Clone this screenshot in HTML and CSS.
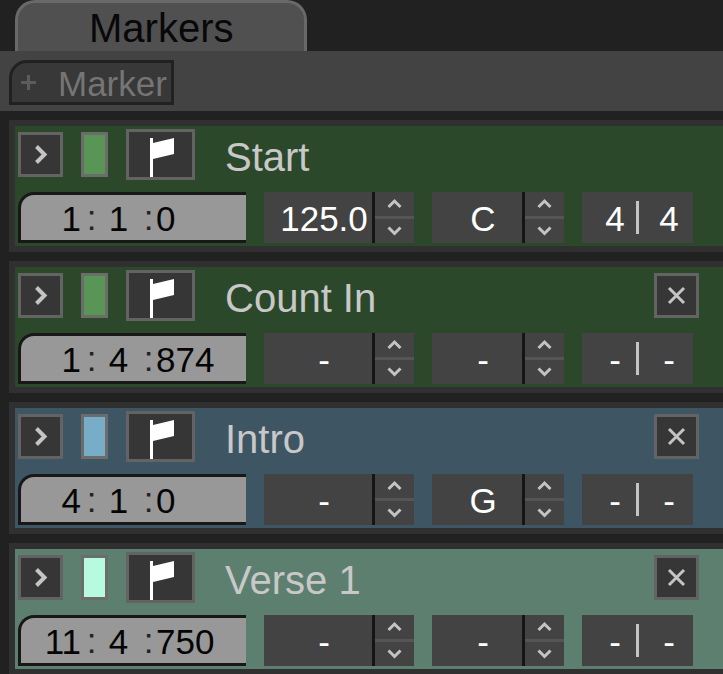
FILE: index.html
```html
<!DOCTYPE html>
<html lang="en">
<head>
    <meta charset="UTF-8">
    <meta name="viewport" content="width=device-width, initial-scale=1.0">
    <title>Markers</title>
    <link rel="stylesheet" href="styles.css">
</head>
<body>
    <!-- Shared icons -->
    <svg class="icon-defs" aria-hidden="true">
        <symbol id="icon-expand" viewBox="0 0 39 39"><path d="M15.500 11.500l8 8-8 8" /></symbol>
        <symbol id="icon-close" viewBox="0 0 39 39"><path d="M12 12l15 15M27 12l-15 15" /></symbol>
        <symbol id="icon-up" viewBox="0 0 39 24"><path d="M13.500 15l6-6 6 6" /></symbol>
        <symbol id="icon-down" viewBox="0 0 39 24"><path d="M13.500 8.500l6 6 6-6" /></symbol>
        <symbol id="icon-flag" viewBox="0 0 63 45"><path d="M21 6h3v5l21-5v16l-21 5v18h-3z" /></symbol>
    </svg>

    <nav class="tabs">
        <button class="tab active">Markers</button>
    </nav>

    <div class="toolbar">
        <button class="add-button">
            <svg viewBox="0 0 15 15" aria-hidden="true"><path d="M7.500 0v15M0 7.500h15" /></svg>
            Marker
        </button>
    </div>

    <main class="marker-list">
        <section class="marker green">
            <div class="marker-row">
                <button class="icon-button" aria-label="Expand"><svg><use href="#icon-expand" /></svg></button>
                <button class="swatch" aria-label="Colour"></button>
                <button class="flag-button" aria-label="Go to marker"><svg><use href="#icon-flag" /></svg></button>
                <h2>Start</h2>
            </div>
            <div class="marker-row">
                <div class="time">
                    <input class="bar" type="text" aria-label="Bar" value="1">
                    <span>:</span>
                    <input class="beat" type="text" aria-label="Beat" value="1">
                    <span>:</span>
                    <input class="tick" type="text" aria-label="Tick" value="0">
                </div>
                <div class="stepper tempo">
                    <input type="text" aria-label="Tempo" value="125.0">
                    <div class="steps">
                        <button aria-label="Tempo up"><svg><use href="#icon-up" /></svg></button>
                        <button aria-label="Tempo down"><svg><use href="#icon-down" /></svg></button>
                    </div>
                </div>
                <div class="stepper key">
                    <input type="text" aria-label="Key" value="C">
                    <div class="steps">
                        <button aria-label="Key up"><svg><use href="#icon-up" /></svg></button>
                        <button aria-label="Key down"><svg><use href="#icon-down" /></svg></button>
                    </div>
                </div>
                <div class="signature">
                    <input type="text" aria-label="Beats per bar" value="4">
                    <input type="text" aria-label="Beat unit" value="4">
                </div>
            </div>
        </section>

        <section class="marker green">
            <div class="marker-row">
                <button class="icon-button" aria-label="Expand"><svg><use href="#icon-expand" /></svg></button>
                <button class="swatch" aria-label="Colour"></button>
                <button class="flag-button" aria-label="Go to marker"><svg><use href="#icon-flag" /></svg></button>
                <h2>Count In</h2>
                <button class="icon-button close" aria-label="Delete"><svg><use href="#icon-close" /></svg></button>
            </div>
            <div class="marker-row">
                <div class="time">
                    <input class="bar" type="text" aria-label="Bar" value="1">
                    <span>:</span>
                    <input class="beat" type="text" aria-label="Beat" value="4">
                    <span>:</span>
                    <input class="tick" type="text" aria-label="Tick" value="874">
                </div>
                <div class="stepper tempo">
                    <input type="text" aria-label="Tempo" value="-">
                    <div class="steps">
                        <button aria-label="Tempo up"><svg><use href="#icon-up" /></svg></button>
                        <button aria-label="Tempo down"><svg><use href="#icon-down" /></svg></button>
                    </div>
                </div>
                <div class="stepper key">
                    <input type="text" aria-label="Key" value="-">
                    <div class="steps">
                        <button aria-label="Key up"><svg><use href="#icon-up" /></svg></button>
                        <button aria-label="Key down"><svg><use href="#icon-down" /></svg></button>
                    </div>
                </div>
                <div class="signature">
                    <input type="text" aria-label="Beats per bar" value="-">
                    <input type="text" aria-label="Beat unit" value="-">
                </div>
            </div>
        </section>

        <section class="marker blue">
            <div class="marker-row">
                <button class="icon-button" aria-label="Expand"><svg><use href="#icon-expand" /></svg></button>
                <button class="swatch" aria-label="Colour"></button>
                <button class="flag-button" aria-label="Go to marker"><svg><use href="#icon-flag" /></svg></button>
                <h2>Intro</h2>
                <button class="icon-button close" aria-label="Delete"><svg><use href="#icon-close" /></svg></button>
            </div>
            <div class="marker-row">
                <div class="time">
                    <input class="bar" type="text" aria-label="Bar" value="4">
                    <span>:</span>
                    <input class="beat" type="text" aria-label="Beat" value="1">
                    <span>:</span>
                    <input class="tick" type="text" aria-label="Tick" value="0">
                </div>
                <div class="stepper tempo">
                    <input type="text" aria-label="Tempo" value="-">
                    <div class="steps">
                        <button aria-label="Tempo up"><svg><use href="#icon-up" /></svg></button>
                        <button aria-label="Tempo down"><svg><use href="#icon-down" /></svg></button>
                    </div>
                </div>
                <div class="stepper key">
                    <input type="text" aria-label="Key" value="G">
                    <div class="steps">
                        <button aria-label="Key up"><svg><use href="#icon-up" /></svg></button>
                        <button aria-label="Key down"><svg><use href="#icon-down" /></svg></button>
                    </div>
                </div>
                <div class="signature">
                    <input type="text" aria-label="Beats per bar" value="-">
                    <input type="text" aria-label="Beat unit" value="-">
                </div>
            </div>
        </section>

        <section class="marker mint">
            <div class="marker-row">
                <button class="icon-button" aria-label="Expand"><svg><use href="#icon-expand" /></svg></button>
                <button class="swatch" aria-label="Colour"></button>
                <button class="flag-button" aria-label="Go to marker"><svg><use href="#icon-flag" /></svg></button>
                <h2>Verse 1</h2>
                <button class="icon-button close" aria-label="Delete"><svg><use href="#icon-close" /></svg></button>
            </div>
            <div class="marker-row">
                <div class="time">
                    <input class="bar" type="text" aria-label="Bar" value="11">
                    <span>:</span>
                    <input class="beat" type="text" aria-label="Beat" value="4">
                    <span>:</span>
                    <input class="tick" type="text" aria-label="Tick" value="750">
                </div>
                <div class="stepper tempo">
                    <input type="text" aria-label="Tempo" value="-">
                    <div class="steps">
                        <button aria-label="Tempo up"><svg><use href="#icon-up" /></svg></button>
                        <button aria-label="Tempo down"><svg><use href="#icon-down" /></svg></button>
                    </div>
                </div>
                <div class="stepper key">
                    <input type="text" aria-label="Key" value="-">
                    <div class="steps">
                        <button aria-label="Key up"><svg><use href="#icon-up" /></svg></button>
                        <button aria-label="Key down"><svg><use href="#icon-down" /></svg></button>
                    </div>
                </div>
                <div class="signature">
                    <input type="text" aria-label="Beats per bar" value="-">
                    <input type="text" aria-label="Beat unit" value="-">
                </div>
            </div>
        </section>
    </main>
</body>
</html>
```
FILE: styles.css
```css
* {
    box-sizing: border-box;
}
body {
    margin: 0;
    background: #212122;
    font-family: "Liberation Sans", Arial, sans-serif;
    font-size: 35px;
}
button, input {
    margin: 0;
    padding: 0;
    border: none;
    border-radius: 0;
    background: none;
    color: inherit;
    font: inherit;
}
button {
    cursor: pointer;
}
svg {
    display: block;
    width: 100%;
    height: 100%;
    fill: none;
    stroke: #c4c4c4;
    stroke-width: 3;
}
.icon-defs {
    position: absolute;
    width: 0;
    height: 0;
}

/* Tabs and toolbar */
.tabs {
    display: flex;
    padding: 0 15px;
}
.tab {
    height: 51px;
    padding: 3px 71px 0;
    border: 3px solid #696969;
    border-bottom: none;
    border-radius: 20px 20px 0 0;
    background: #505050;
    color: #08080a;
    font-size: 40px;
    line-height: 45px;
}
.toolbar {
    display: flex;
    padding: 9px 9px 6px;
    background: #434343;
}
.add-button {
    display: flex;
    align-items: center;
    gap: 22px;
    height: 45px;
    padding: 2px 4px 0 9px;
    border: 3px solid #212121;
    border-top-left-radius: 18px;
    background: #383838;
    color: #757575;
}
.add-button svg {
    width: 15px;
    height: 15px;
    margin-bottom: 2px;
    stroke: #5c5c5c;
}

/* Marker cards */
.marker-list {
    display: flex;
    flex-direction: column;
    gap: 9px;
    padding: 9px 0 0 9px;
}
.marker {
    display: flex;
    flex-direction: column;
    gap: 12px;
    padding: 3px;
    border: 6px solid #313030;
    border-right: none;
}
.marker.green {
    background: #2c482a;
}
.marker.blue {
    background: #3e5663;
}
.marker.mint {
    background: #5d7f70;
}
.marker-row {
    display: flex;
    align-items: center;
    gap: 18px;
    height: 51px;
}
.marker h2 {
    flex: 1;
    margin: 0;
    padding: 6px 0 0 12px;
    color: #c8c8c8;
    font-size: 40px;
    font-weight: normal;
    line-height: 45px;
}
.icon-button, .swatch, .flag-button {
    flex: none;
    height: 45px;
    border: 3px solid #636363;
    background: #363636;
}
.icon-button {
    width: 45px;
}
.icon-button svg {
    stroke-width: 4;
}
.close {
    margin-right: 21px;
}
.close svg {
    stroke-width: 3;
}
.swatch {
    width: 27px;
    border-color: #6c6c6c;
}
.green .swatch {
    background: #599655;
}
.blue .swatch {
    background: #78adc8;
}
.mint .swatch {
    background: #b6fbe0;
}
.flag-button {
    width: 69px;
    height: 51px;
}
.flag-button svg {
    fill: #fff;
    stroke: none;
}

/* Position fields */
.time {
    display: flex;
    width: 228px;
    height: 51px;
    border: 3px solid #181818;
    border-right: none;
    border-top-left-radius: 16px;
    background: #989898;
    color: #050505;
}
.time input {
    height: 45px;
    padding-top: 2px;
}
.time span {
    width: 15px;
    color: #222;
    line-height: 45px;
    text-align: center;
}
.time .bar {
    width: 63px;
    padding-right: 3px;
    text-align: right;
}
.time .beat {
    width: 42px;
    padding-right: 3px;
    text-align: center;
}
.time .tick {
    flex: 1;
    min-width: 0;
}

/* Tempo, key and time signature */
.stepper, .signature {
    display: flex;
    height: 51px;
    background: #434343;
    color: #fff;
}
.stepper input {
    border-right: 3px solid #151515;
    padding: 2px 0 0 12px;
    text-align: center;
}
.tempo input {
    width: 111px;
}
.key input {
    width: 93px;
}
.steps {
    display: flex;
    flex-direction: column;
    width: 39px;
}
.steps button {
    height: 24px;
}
.steps button + button {
    height: 27px;
    border-top: 3px solid #555;
}
.signature {
    align-items: center;
    gap: 9px;
    padding: 0 3px 0 12px;
}
.signature input {
    width: 42px;
    height: 51px;
    padding-top: 2px;
    text-align: center;
}
.signature input:first-child {
    width: 45px;
    height: 33px;
    border-right: 3px solid #c4c4c4;
}
```
